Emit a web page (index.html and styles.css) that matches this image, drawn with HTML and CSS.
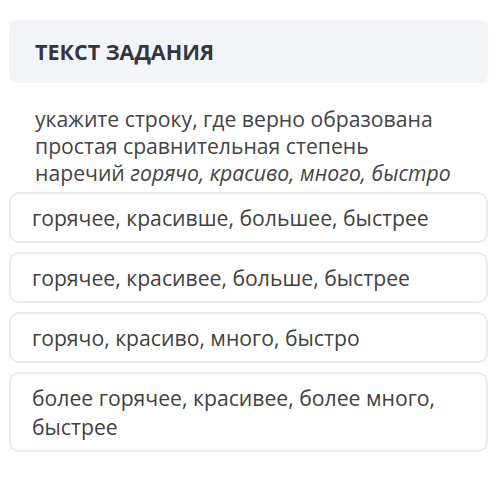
FILE: index.html
```html
<!DOCTYPE html>
<html lang="ru">
<head>
    <meta charset="UTF-8">
    <meta name="viewport" content="width=device-width, initial-scale=1.0">
    <title>Текст задания</title>
    <link rel="stylesheet" href="styles.css">
</head>
<body>
    <div class="task">
        <div class="task-header">
            <h2 class="task-title">ТЕКСТ ЗАДАНИЯ</h2>
        </div>
        <p class="task-question">
            укажите строку, где верно образована простая сравнительная степень наречий <i>горячо, красиво, много, быстро</i>
        </p>
        <div class="answers">
            <div class="answer">горячее, красивше, большее, быстрее</div>
            <div class="answer">горячее, красивее, больше, быстрее</div>
            <div class="answer">горячо, красиво, много, быстро</div>
            <div class="answer">более горячее, красивее, более много, быстрее</div>
        </div>
    </div>
</body>
</html>
```

FILE: styles.css
```css
/* общие */
* {
    box-sizing: border-box;
    margin: 0;
    padding: 0;
}

body {
    background: #fff;
    font-family: 'Open Sans', 'Noto Sans', sans-serif;
    color: #3f3f3f;
}

.task {
    width: 479px;
    margin-left: 9px;
    padding-top: 20px;
}

/* шапка */
.task-header {
    height: 63px;
    display: flex;
    align-items: center;
    padding-left: 26px;
    background: #f3f4f7;
    border-radius: 8px;
}

.task-title {
    font-size: 21.5px;
    font-weight: 700;
    color: #33363d;
}

/* вопрос */
.task-question {
    margin-top: 22px;
    padding: 0 28px 0 26px;
    font-size: 21.2px;
    line-height: 27px;
    color: #444;
}

.task-question i {
    font-style: italic;
}

/* варианты ответа */
.answers {
    display: flex;
    flex-direction: column;
    gap: 9px;
    margin-top: 6px;
}

.answer {
    min-height: 51px;
    display: flex;
    align-items: center;
    padding: 9px 40px 9px 21px;
    border: 2px solid #ebebeb;
    border-radius: 10px;
    font-size: 21.2px;
    line-height: 29px;
    color: #414141;
}
```
